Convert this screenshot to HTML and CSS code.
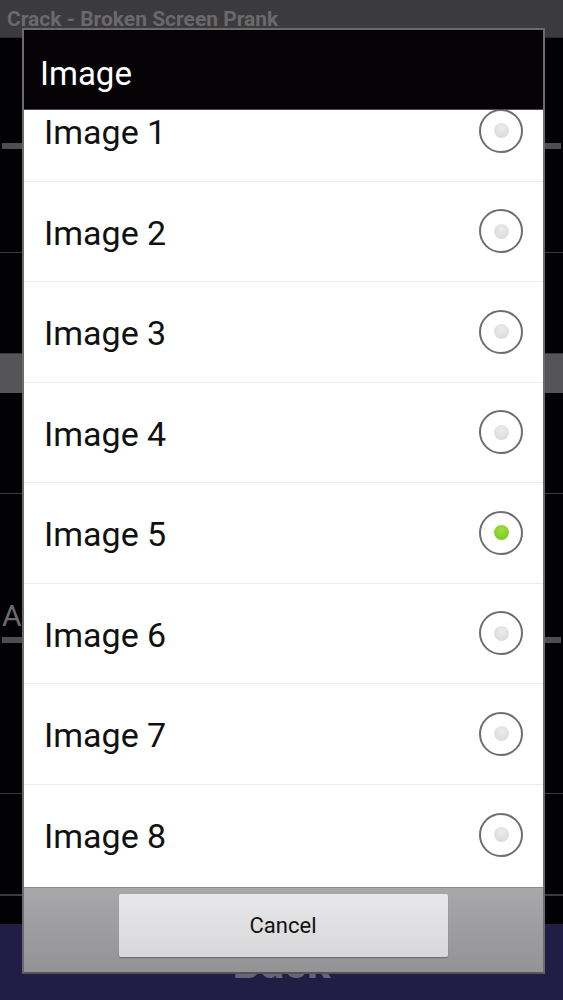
FILE: index.html
```html
<!DOCTYPE html>
<html lang="en">
<head>
  <meta charset="UTF-8">
  <title>Crack - Broken Screen Prank</title>
  <link rel="stylesheet" href="styles.css">
</head>
<body>

  <div id="app">
    <div class="titlebar">Crack - Broken Screen Prank</div>
    <div class="section first">
      <div class="seek"></div>
    </div>
    <div class="section"></div>
    <div class="header-strip"></div>
    <div class="section"></div>
    <div class="section tall">
      <div class="label">A</div>
      <div class="seek short"></div>
    </div>
    <div class="section"></div>
    <div class="gap"></div>
    <div class="backbar">Back</div>
  </div>

  <div id="dialog">
    <div class="dlg-title">Image</div>
    <div class="dlg-list">
      <div class="rows">
        <div class="row"><span>Image 1</span><i class="radio"></i></div>
        <div class="row"><span>Image 2</span><i class="radio"></i></div>
        <div class="row"><span>Image 3</span><i class="radio"></i></div>
        <div class="row"><span>Image 4</span><i class="radio"></i></div>
        <div class="row"><span>Image 5</span><i class="radio on"></i></div>
        <div class="row"><span>Image 6</span><i class="radio"></i></div>
        <div class="row"><span>Image 7</span><i class="radio"></i></div>
        <div class="row"><span>Image 8</span><i class="radio"></i></div>
      </div>
    </div>
    <div class="dlg-foot">
      <button>Cancel</button>
    </div>
  </div>

</body>
</html>
```

FILE: styles.css
```css
body {
  margin: 0;
  font-family: Roboto, "Noto Sans", sans-serif;
  background: #020104;
  overflow: hidden;
}

#app {
  height: 1000px;
  display: flex;
  flex-direction: column;
}

#app > div {
  flex-shrink: 0;
}

.titlebar {
  height: 38px;
  background: #3b3a3c;
  color: #6a696b;
  font-weight: bold;
  font-size: 21px;
  line-height: 38px;
  padding-left: 7px;
  border-bottom: 1px solid #2a292b;
  box-sizing: border-box;
}

.section {
  height: 101px;
  border-bottom: 1px solid #3a3a3a;
  box-sizing: border-box;
  position: relative;
}

.section.first {
  height: 215px;
  padding-top: 105px;
}

.section.tall {
  height: 300px;
  padding-top: 106px;
}

.seek {
  height: 6px;
  margin: 0 2px;
  background: #4e4d50;
}

.seek.short {
  margin-top: 5px;
}

.label {
  color: #6c6c6c;
  font-size: 30px;
  line-height: 32px;
  padding-left: 2px;
}

.header-strip {
  height: 39px;
  background: #555457;
}

.gap {
  height: 28px;
  border-top: 1px solid #3a3a3a;
}

#app > .backbar {
  flex: 1 1 auto;
  min-height: 0;
  overflow: hidden;
  background: #211d45;
  color: #66657a;
  font-weight: bold;
  font-size: 44px;
  line-height: 50px;
  text-align: center;
  padding-top: 14px;
}

#dialog {
  position: absolute;
  left: 22px;
  top: 28px;
  width: 523px;
  height: 946px;
  box-sizing: border-box;
  border: 2px solid #6b6a6d;
  border-bottom-color: #555;
  display: flex;
  flex-direction: column;
  background: #fff;
}

.dlg-title {
  height: 80px;
  background: #040205;
  color: #fff;
  font-size: 33px;
  line-height: 88px;
  padding-left: 16px;
  border-bottom: 1px solid #4a4a4a;
  box-sizing: border-box;
}

.dlg-list {
  height: 777px;
  overflow: hidden;
  background: #fff;
}

.rows {
  margin-top: -29px;
}

.row {
  height: 100.5px;
  box-sizing: border-box;
  border-bottom: 1px solid #ececec;
  display: flex;
  align-items: center;
  justify-content: space-between;
  padding: 0 20px 0 20px;
  color: #111;
  font-size: 34px;
}

.row span {
  padding-top: 3px;
}

.row:last-child {
  border-bottom: none;
}

.radio {
  width: 40px;
  height: 40px;
  border: 2px solid #6e6e6e;
  border-radius: 50%;
  display: flex;
  align-items: center;
  justify-content: center;
  background: #fff;
}

.radio::after {
  content: "";
  width: 15px;
  height: 15px;
  border-radius: 50%;
  background: radial-gradient(circle at 50% 35%, #ececec, #d6d6d6);
}

.radio.on::after {
  background: radial-gradient(circle at 50% 35%, #a0e040, #72c21a);
}

.dlg-foot {
  flex: 1;
  background: linear-gradient(#a8a7a9, #939294);
  border-top: 1px solid #8a898b;
  padding-top: 6px;
  display: flex;
  justify-content: center;
  align-items: flex-start;
}

button {
  width: 329px;
  height: 63px;
  margin-left: -1px;
  border: none;
  border-radius: 2px;
  background: linear-gradient(#e8e7e9, #d8d7d9);
  box-shadow: 0 1px 1px #6a696b;
  font-family: Roboto, "Noto Sans", sans-serif;
  font-size: 22px;
  color: #111;
}
```
